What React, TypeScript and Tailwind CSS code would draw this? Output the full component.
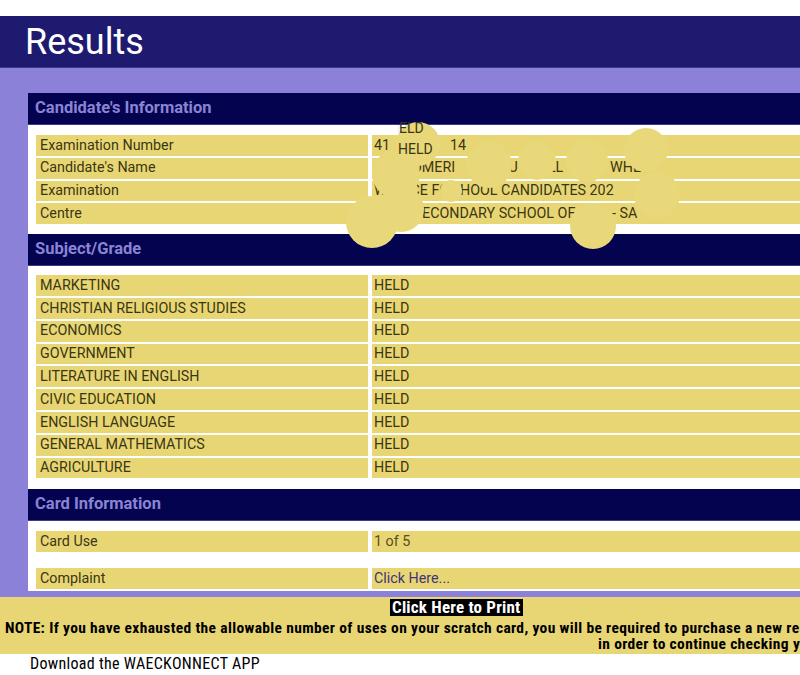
import React from 'react';

const candidate = ['Examination Number', "Candidate's Name", 'Examination', 'Centre'];
const subjects = [
  'MARKETING',
  'CHRISTIAN RELIGIOUS STUDIES',
  'ECONOMICS',
  'GOVERNMENT',
  'LITERATURE IN ENGLISH',
  'CIVIC EDUCATION',
  'ENGLISH LANGUAGE',
  'GENERAL MATHEMATICS',
  'AGRICULTURE',
];

// redaction blobs over the candidate values: [left, top, size]
const blobs: [number, number, number][] = [
  [396, 122, 44],
  [372, 150, 48],
  [378, 186, 46],
  [346, 196, 52],
  [466, 142, 46],
  [518, 142, 38],
  [566, 140, 42],
  [624, 128, 44],
  [634, 172, 46],
  [570, 203, 46],
  [440, 180, 22],
];

function SectionHeader({ title }: { title: string }) {
  return (
    <div className="h-[32px] bg-[#04034f] flex items-center pl-[7px] border-b border-[#3a3890]">
      <span className="font-bold text-[16.5px] text-[#8a84d4]">{title}</span>
    </div>
  );
}

function Row({ label, children }: { label: string; children?: React.ReactNode }) {
  return (
    <div className="flex gap-[4px] h-[20.8px]">
      <div className="w-[332px] bg-[#e8d675] pl-[4px] flex items-center text-[14.3px] text-[#3b3612]">{label}</div>
      <div className="flex-1 bg-[#e8d675] pl-[2px] flex items-center text-[14.3px] text-[#3b3612] whitespace-nowrap">{children}</div>
    </div>
  );
}

export default function App() {
  return (
    <div className="w-[800px] h-[675px] overflow-hidden bg-white relative font-['Roboto',Arial,sans-serif]">
      <div className="w-[908px] pt-[16px]">
        <div className="h-[52px] bg-[#1e1a6f] flex items-center pl-[25px] border-b border-[#3d3a8a]">
          <h1 className="text-[36px] text-white leading-none">Results</h1>
        </div>

        <div className="bg-[#8b81d9] px-[28px] pt-[25px] pb-[6px]">
          <div className="bg-white pb-[2px]">
            <SectionHeader title="Candidate's Information" />
            <div className="flex flex-col gap-[2px] px-[8px] mt-[10px]">
              <Row label={candidate[0]}>
                <span className="inline-block w-[76px]">41</span>
                <span>14</span>
              </Row>
              <Row label={candidate[1]}>
                <span className="inline-block w-[38px]" />
                <span className="inline-block w-[88px]">OMERI</span>
                <span className="inline-block w-[40px]">SU</span>
                <span className="inline-block w-[70px]">JLL</span>
                <span>WHE</span>
              </Row>
              <Row label={candidate[2]}>
                <span className="inline-block w-[28px]">W</span>
                <span className="inline-block w-[58px]">SCE FOR</span>
                <span>HOOL CANDIDATES 202</span>
              </Row>
              <Row label={candidate[3]}>
                <span className="inline-block w-[48px]" />
                <span className="inline-block w-[190px]">ECONDARY SCHOOL OF</span>
                <span>- SA</span>
              </Row>
            </div>

            <div className="mt-[10px]">
              <SectionHeader title="Subject/Grade" />
            </div>
            <div className="flex flex-col gap-[2px] px-[8px] mt-[9px]">
              {subjects.map((s) => (
                <Row key={s} label={s}>
                  HELD
                </Row>
              ))}
            </div>

            <div className="mt-[11px]">
              <SectionHeader title="Card Information" />
            </div>
            <div className="flex flex-col px-[8px] mt-[10px]">
              <Row label="Card Use">
                <span className="text-[#5a4f20]">1 of 5</span>
              </Row>
              <div className="h-[16px]" />
              <Row label="Complaint">
                <span className="text-[#3f3478]">Click Here...</span>
              </Row>
            </div>
          </div>
        </div>

        <div className="bg-[#e8d675] h-[57px] pt-[2px] font-['Roboto_Condensed','Liberation_Sans',sans-serif]">
          <div className="flex">
            <span className="ml-[390px] bg-black text-white font-bold text-[17px] leading-[17px] tracking-[0.2px] px-[2px]">Click Here to Print</span>
          </div>
          <div className="mt-[4px] pl-[5px] whitespace-nowrap font-bold text-[15.5px] tracking-[0.35px] leading-[16px] text-black">
            NOTE: If you have exhausted the allowable number of uses on your scratch card, you will be required to purchase a new result checker scratch card
          </div>
          <div className="pl-[598px] whitespace-nowrap font-bold text-[15.5px] tracking-[0.35px] leading-[16px] text-black">
            in order to continue checking your result.
          </div>
        </div>

        <div className="pl-[30px] pt-[1px] font-['Roboto_Condensed','Liberation_Sans',sans-serif] text-[16px] tracking-[0.3px] leading-[18px] text-black">
          Download the WAECKONNECT APP
        </div>
      </div>

      {blobs.map(([x, y, d], i) => (
        <div
          key={i}
          className="absolute rounded-full bg-[#e9d87a]"
          style={{ left: x, top: y, width: d, height: d }}
        />
      ))}
      <div className="absolute left-[398px] top-[121px] text-[14px] leading-[14px] text-[#3b3612] overflow-hidden w-[36px] h-[14px]">
        <span className="block -ml-[9px]">HELD</span>
      </div>
      <div className="absolute left-[398px] top-[142px] text-[14px] leading-[15px] text-[#3b3612]">HELD</div>
    </div>
  );
}
